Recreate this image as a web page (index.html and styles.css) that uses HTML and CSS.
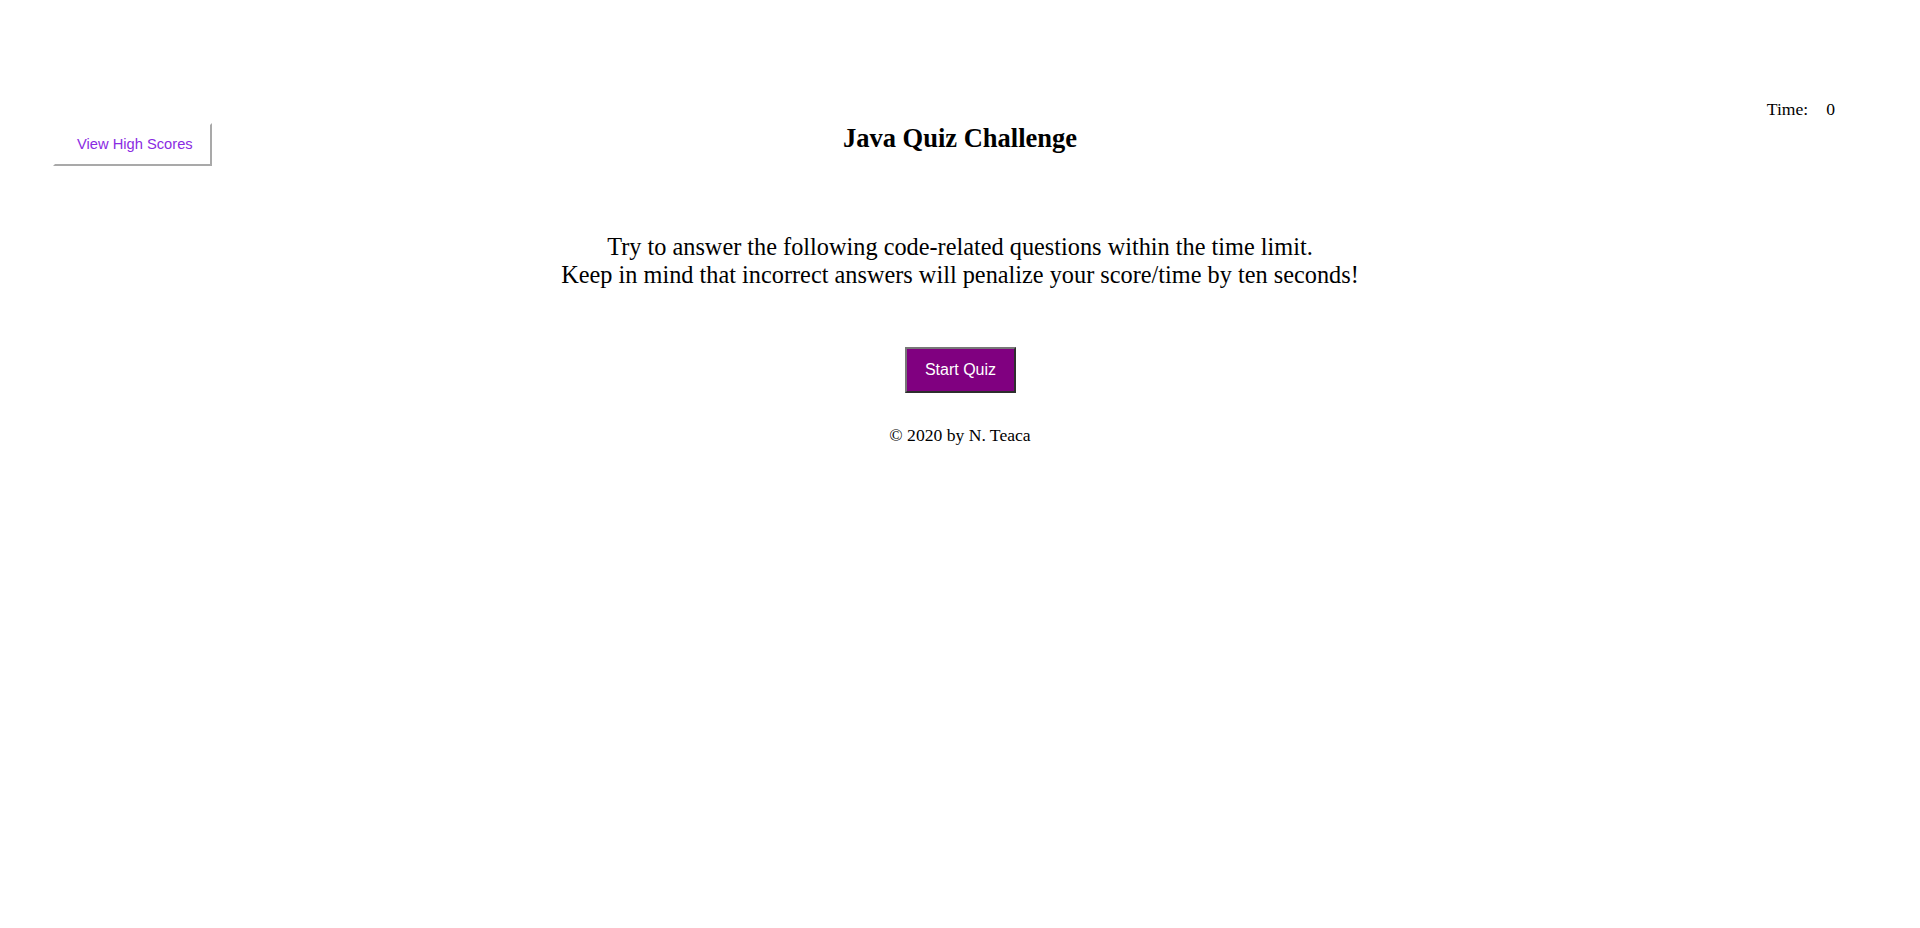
FILE: index.html
```html
<!DOCTYPE html>
<html lang="en">
<head>
<meta charset="utf-8">
<title>Java Quiz Challenge</title>
<link rel="stylesheet" href="styles.css">
</head>
<body>
<header class="top">
  <button class="scores-btn" type="button">View High Scores</button>
  <h1 class="title">Java Quiz Challenge</h1>
  <div class="timer"><span class="timer-label">Time:</span><span class="timer-value">0</span></div>
</header>
<main class="intro">
  <p class="intro-text">Try to answer the following code-related questions within the time limit.<br>Keep in mind that incorrect answers will penalize your score/time by ten seconds!</p>
  <button class="start-btn" type="button">Start Quiz</button>
  <p class="copyright">© 2020 by N. Teaca</p>
</main>
</body>
</html>
```
FILE: styles.css
```css
html, body {
  margin: 0;
  padding: 0;
  background: #ffffff;
}

body {
  font-family: "Liberation Serif", "Times New Roman", serif;
  color: #000000;
}

.top {
  display: grid;
  grid-template-columns: 1fr auto 1fr;
  align-items: start;
}

.scores-btn {
  justify-self: start;
  margin: 123px 0 0 53px;
  padding: 11px 17px 11px 22px;
  font-family: "Liberation Sans", Arial, sans-serif;
  font-size: 14.7px;
  line-height: 17px;
  color: #8a2be2;
  background: #ffffff;
  border: 2px solid;
  border-color: #ffffff #a9a9a9 #a9a9a9 #ffffff;
  cursor: pointer;
}

.title {
  margin: 123px 0 0;
  font-size: 26.5px;
  line-height: 30px;
  font-weight: bold;
  text-align: center;
}

.timer {
  justify-self: end;
  margin: 99px 85px 0 0;
  display: flex;
  gap: 18px;
  font-size: 17.6px;
  line-height: 20px;
}

.intro {
  display: flex;
  flex-direction: column;
  align-items: center;
  text-align: center;
}

.intro-text {
  margin: 67px 0 0;
  font-size: 24.3px;
  line-height: 28px;
}

.start-btn {
  margin: 58px 0 0 1px;
  padding: 11px 17.5px 12px;
  font-family: "Liberation Sans", Arial, sans-serif;
  font-size: 16px;
  line-height: 19px;
  color: #ffffff;
  background: #800080;
  border: 2px solid;
  border-color: #777777 #2e2e2e #2e2e2e #777777;
  cursor: pointer;
}

.copyright {
  margin: 32px 0 0;
  font-size: 17.6px;
  line-height: 20px;
}
```
